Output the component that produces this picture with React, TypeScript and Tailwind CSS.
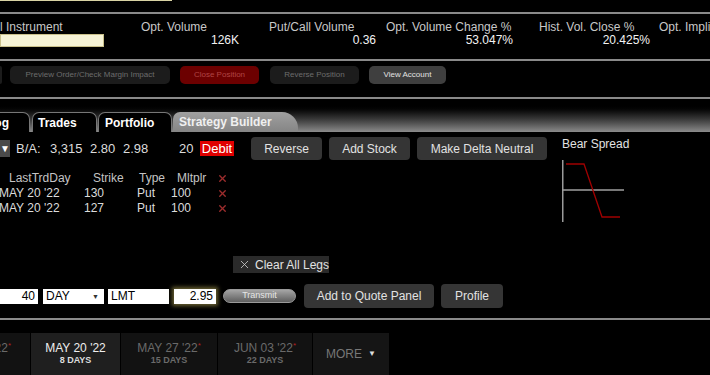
import { X } from 'lucide-react';

const font = { fontFamily: '"Liberation Sans", Arial, sans-serif' };

const Rule = () => <div className="h-[2px] w-full shrink-0 bg-[#8a8a8a]" />;

const stats = [
  { label: 'Opt. Volume', value: '126K', ml: 'ml-[37px]', w: 'w-[98px]' },
  { label: 'Put/Call Volume', value: '0.36', ml: 'ml-[30px]', w: 'w-[107px]' },
  { label: 'Opt. Volume Change %', value: '53.047%', ml: 'ml-[10px]', w: 'w-[127px]' },
  { label: 'Hist. Vol. Close %', value: '20.425%', ml: 'ml-[26px]', w: 'w-[111px]' },
];

const legs = [
  { day: "MAY 20 '22", strike: '130', type: 'Put', mult: '100' },
  { day: "MAY 20 '22", strike: '127', type: 'Put', mult: '100' },
];

const expiries = [
  { date: "MAY 27 '22", days: '15 DAYS', w: 'w-[96px]' },
  { date: "JUN 03 '22", days: '22 DAYS', w: 'w-[94px]' },
];

export default function App() {
  return (
    <div style={font} className="w-[710px] h-[375px] overflow-hidden bg-black text-[12px] text-[#dcdcdc] flex flex-col">
      {/* top strip */}
      <div className="h-[12px] shrink-0">
        <div className="h-[1px] w-[172px] bg-[#d9d3a4]" />
      </div>
      <Rule />

      {/* header stats */}
      <div className="h-[45px] shrink-0 pt-[6px] flex overflow-hidden">
        <div className="w-[104px] shrink-0 flex flex-col">
          <div className="h-[14px] leading-[14px] text-[#c8c8c8] whitespace-nowrap">l Instrument</div>
          <div className="h-[13px] bg-[#f6f3d6] border border-[#c9c08a]" />
        </div>
        {stats.map((s) => (
          <div key={s.label} className={`${s.ml} ${s.w} shrink-0 flex flex-col`}>
            <div className="h-[14px] leading-[14px] text-[#c8c8c8] whitespace-nowrap">{s.label}</div>
            <div className="h-[13px] leading-[13px] text-right text-[#f2f2f2]">{s.value}</div>
          </div>
        ))}
        <div className="ml-[9px] shrink-0 flex flex-col">
          <div className="h-[14px] leading-[14px] text-[#c8c8c8] whitespace-nowrap">Opt. Implied Vol. %</div>
        </div>
      </div>
      <Rule />

      {/* action buttons */}
      <div className="h-[36px] shrink-0 pt-[5px] flex text-[8px]">
        <div className="w-[2px] h-[18px] bg-[#1c1c1c] rounded-r-[4px]" />
        <div className="ml-[8px] w-[160px] h-[18px] rounded-[5px] bg-[#1c1c1c] text-[#6c6c6c] flex items-center justify-center">Preview Order/Check Margin Impact</div>
        <div className="ml-[10px] w-[79px] h-[18px] rounded-[5px] bg-[#6c0000] text-[#b04545] flex items-center justify-center">Close Position</div>
        <div className="ml-[11px] w-[89px] h-[18px] rounded-[5px] bg-[#1c1c1c] text-[#6c6c6c] flex items-center justify-center">Reverse Position</div>
        <div className="ml-[10px] w-[77px] h-[18px] rounded-[5px] bg-[#3f3f3f] text-[#e2e2e2] flex items-center justify-center">View Account</div>
      </div>
      <Rule />

      {/* tab bar */}
      <div className="h-[33px] shrink-0 flex items-end bg-linear-to-b from-black from-15% to-[#8c8c8c] font-bold text-[12px]">
        <div className="w-[30px] h-[20px] bg-black border-t border-r border-[#777] rounded-tr-[7px] overflow-hidden flex justify-end items-center pr-[20px] text-white">Log</div>
        <div className="ml-[2px] w-[65px] h-[20px] bg-black border-t border-l border-r border-[#777] rounded-t-[7px] pl-[5px] flex items-center text-white">Trades</div>
        <div className="ml-[1px] w-[74px] h-[20px] bg-black border-t border-l border-r border-[#777] rounded-t-[7px] pl-[6px] flex items-center text-white">Portfolio</div>
        <div className="ml-[1px] w-[125px] h-[20px] bg-linear-to-b from-[#a0a0a0] to-[#858585] rounded-tl-[7px] rounded-tr-[16px] pl-[6px] flex items-center text-[#f0f0f0]">Strategy Builder</div>
      </div>

      {/* strategy builder content */}
      <div className="h-[186px] shrink-0 flex">
        <div className="w-[552px] shrink-0 flex flex-col">
          <div className="mt-[5px] h-[23px] flex items-center text-[13px]">
            <div className="w-[10px] h-[17px] bg-[#4a4a4a] text-white text-[10px] flex items-center justify-center">▼</div>
            <span className="ml-[6px] w-[34px]">B/A:</span>
            <span className="w-[40px]">3,315</span>
            <span className="w-[33px]">2.80</span>
            <span className="w-[56px]">2.98</span>
            <span className="w-[21px]">20</span>
            <span className="w-[34px] h-[15px] bg-[#e00000] text-white flex items-center justify-center">Debit</span>
            <button className="ml-[17px] w-[71px] h-[23px] rounded-[4px] bg-[#353535] text-[12px] text-[#e2e2e2]">Reverse</button>
            <button className="ml-[7px] w-[81px] h-[23px] rounded-[4px] bg-[#353535] text-[12px] text-[#e2e2e2]">Add Stock</button>
            <button className="ml-[7px] w-[130px] h-[23px] rounded-[4px] bg-[#353535] text-[12px] text-[#e2e2e2]">Make Delta Neutral</button>
          </div>

          <div className="mt-[11px] grid grid-cols-[84px_53px_34px_46px_20px] text-[12px]">
            <div className="h-[15px] leading-[15px] pl-[9px] text-[#c4c4c4]">LastTrdDay</div>
            <div className="h-[15px] leading-[15px] pl-[9px] text-[#c4c4c4]">Strike</div>
            <div className="h-[15px] leading-[15px] pl-[2px] text-[#c4c4c4]">Type</div>
            <div className="h-[15px] leading-[15px] pl-[6px] text-[#c4c4c4]">Mltplr</div>
            <div className="h-[15px] flex items-center"><X size={11} strokeWidth={3} className="text-[#9c2d2d]" /></div>
            {legs.map((l, i) => (
              <div key={i} className="contents">
                <div className="h-[15px] leading-[15px] -ml-[1px] whitespace-nowrap">{l.day}</div>
                <div className="h-[15px] leading-[15px]">{l.strike}</div>
                <div className="h-[15px] leading-[15px]">{l.type}</div>
                <div className="h-[15px] leading-[15px]">{l.mult}</div>
                <div className="h-[15px] flex items-center"><X size={11} strokeWidth={3} className="text-[#9c2d2d]" /></div>
              </div>
            ))}
          </div>

          <div className="mt-[40px] ml-[233px] w-[96px] h-[17px] bg-[#2a2a2a] flex items-center gap-[4px] pl-[5px] text-[12px] text-[#e2e2e2] whitespace-nowrap">
            <X size={13} strokeWidth={1.5} className="text-[#cfcfcf] shrink-0" />
            <span>Clear All Legs</span>
          </div>

          <div className="mt-[11px] h-[24px] flex items-center text-[12px] text-black">
            <div className="w-[38px] h-[15px] bg-white text-right pr-[3px] leading-[15px]">40</div>
            <div className="ml-[5px] w-[61px] h-[15px] bg-white flex items-center justify-between pl-[3px] pr-[5px] leading-[15px]">
              <span>DAY</span>
              <span className="text-[7px] text-[#333]">▼</span>
            </div>
            <div className="ml-[4px] w-[61px] h-[15px] bg-white pl-[3px] leading-[15px]">LMT</div>
            <div className="ml-[5px] w-[42px] h-[15px] bg-white text-right pr-[3px] leading-[15px] shadow-[0_0_4px_2px_rgba(190,175,90,0.55)]">2.95</div>
            <div className="ml-[7px] w-[73px] h-[14px] rounded-full bg-linear-to-b from-[#a5a5a5] to-[#5f5f5f] border border-[#9a9a9a] text-[9px] text-[#e6e6e6] flex items-center justify-center">Transmit</div>
            <button className="ml-[8px] w-[130px] h-[24px] rounded-[4px] bg-[#353535] text-[#e2e2e2]">Add to Quote Panel</button>
            <button className="ml-[7px] w-[62px] h-[24px] rounded-[4px] bg-[#353535] text-[#e2e2e2]">Profile</button>
          </div>
        </div>

        <div className="ml-[10px] flex flex-col">
          <div className="mt-[5px] h-[14px] leading-[14px] text-[12px] text-[#e2e2e2]">Bear Spread</div>
          <svg width="70" height="66" viewBox="0 0 70 66" className="mt-[7px]">
            <line x1="0.75" y1="2" x2="0.75" y2="64" stroke="#9a9a9a" strokeWidth="1.5" />
            <line x1="0" y1="32" x2="62" y2="32" stroke="#a0a0a0" strokeWidth="1.5" />
            <polyline points="4,6 22,6 40,59 58,59" fill="none" stroke="#a00000" strokeWidth="1.3" />
          </svg>
        </div>
      </div>
      <Rule />

      {/* expiry tabs */}
      <div className="h-[13px] shrink-0" />
      <div className="h-[42px] shrink-0 flex">
        <div className="w-[30px] shrink-0 bg-[#121212] overflow-hidden flex justify-end pr-[19px] pt-[8px]">
          <span className="whitespace-nowrap leading-[14px] text-[12px] text-[#6a6a6a]">MAY 13 '22<sup className="text-[#b02020] text-[8px]">*</sup></span>
        </div>
        <div className="ml-[1px] w-[89px] shrink-0 bg-[#1f1f1f] flex flex-col items-center pt-[8px]">
          <span className="leading-[14px] text-[12px] text-[#eeeeee]">MAY 20 '22</span>
          <span className="leading-[11px] text-[9px] font-bold text-[#dddddd]">8 DAYS</span>
        </div>
        {expiries.map((e) => (
          <div key={e.date} className={`ml-[1px] ${e.w} shrink-0 bg-[#121212] flex flex-col items-center pt-[8px]`}>
            <span className="leading-[14px] text-[12px] text-[#6a6a6a] whitespace-nowrap">{e.date}<sup className="text-[#b02020] text-[8px]">*</sup></span>
            <span className="leading-[11px] text-[9px] font-bold text-[#6a6a6a]">{e.days}</span>
          </div>
        ))}
        <div className="ml-[1px] w-[76px] shrink-0 bg-[#151515] flex items-center justify-center gap-[6px] text-[12px] text-[#777]">
          <span>MORE</span>
          <span className="text-[8px] text-[#ddd]">▼</span>
        </div>
      </div>
    </div>
  );
}
